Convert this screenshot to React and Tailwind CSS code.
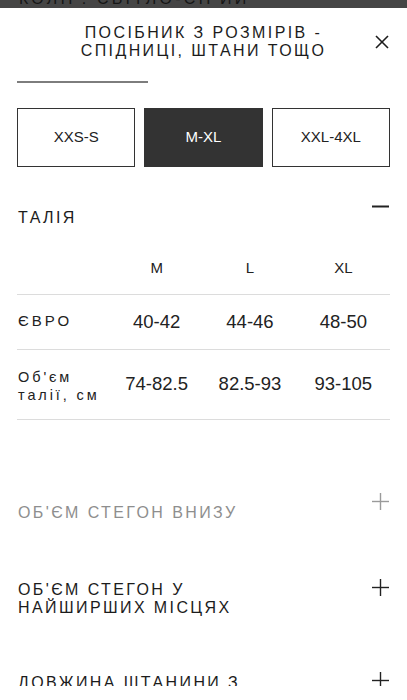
import React from "react";

const font = { fontFamily: '"Liberation Sans", Arial, sans-serif' };

function Plus({ gray }) {
  const c = gray ? "#9a9a9a" : "#222";
  return (
    <svg width="17" height="17" viewBox="0 0 17 17" className="shrink-0 mb-6 mr-[1px]">
      <line x1="0" y1="8.5" x2="17" y2="8.5" stroke={c} strokeWidth="1.4" />
      <line x1="8.5" y1="0" x2="8.5" y2="17" stroke={c} strokeWidth="1.4" />
    </svg>
  );
}

function Minus() {
  return (
    <svg width="17" height="17" viewBox="0 0 17 17" className="shrink-0 mb-6 mr-[1px]">
      <line x1="0" y1="8.5" x2="17" y2="8.5" stroke="#222" strokeWidth="2" />
    </svg>
  );
}

function SectionHead({ lines, gray, open, className }) {
  return (
    <div className={"flex items-center justify-between pl-[18px] pr-[17px] " + className}>
      <div
        className={
          "text-[16px] leading-[18px] tracking-[0.15em] " +
          (gray ? "text-[#8e8e8e]" : "text-[#1c1c1c]")
        }
      >
        {lines.map((l) => (
          <div key={l}>{l}</div>
        ))}
      </div>
      {open ? <Minus /> : <Plus gray={gray} />}
    </div>
  );
}

export default function App() {
  const cols = ["M", "L", "XL"];
  return (
    <div className="relative w-[407px] h-[700px] overflow-hidden bg-white" style={font}>
      <div className="h-[8px] bg-[#454545] overflow-hidden pl-[19px]">
        <div className="-mt-[9px] text-[16px] leading-[16px] tracking-[0.2em] text-[#151515] whitespace-nowrap">
          КОЛІР: СВІТЛО-СІРИЙ
        </div>
      </div>

      <div className="grid grid-cols-[48px_1fr_48px] pt-[16px]">
        <div />
        <div className="text-center text-[16px] leading-[18px] tracking-[0.15em] text-[#1c1c1c]">
          <div>ПОСІБНИК З РОЗМІРІВ -</div>
          <div>СПІДНИЦІ, ШТАНИ ТОЩО</div>
        </div>
        <div className="flex justify-start pl-[16px] pt-[11px]">
          <svg width="14" height="14" viewBox="0 0 14 14">
            <line x1="1" y1="1" x2="13" y2="13" stroke="#1c1c1c" strokeWidth="1.6" />
            <line x1="13" y1="1" x2="1" y2="13" stroke="#1c1c1c" strokeWidth="1.6" />
          </svg>
        </div>
      </div>

      <div className="ml-[17px] mt-[21px] w-[131px] h-[1.5px] bg-[#7d7d7d]" />

      <div className="grid grid-cols-3 gap-[9px] px-[17px] mt-[25px]">
        <div className="h-[59px] border border-[#333] flex items-center justify-center text-[15px] text-[#222]">
          XXS-S
        </div>
        <div className="h-[59px] border border-[#333] bg-[#333] flex items-center justify-center text-[15px] text-white">
          M-XL
        </div>
        <div className="h-[59px] border border-[#333] flex items-center justify-center text-[15px] text-[#222]">
          XXL-4XL
        </div>
      </div>

      <SectionHead lines={["ТАЛІЯ"]} open className="mt-[31px]" />

      <div className="mx-[17px]">
        <div className="grid grid-cols-[93px_1fr_1fr_1fr] pt-[20px] pb-[17px] border-b border-[#dcdcdc] text-[15px] leading-[18px] text-[#222]">
          <div />
          {cols.map((c) => (
            <div key={c} className="text-center">
              {c}
            </div>
          ))}
        </div>
        <div className="grid grid-cols-[93px_1fr_1fr_1fr] h-[55px] items-center border-b border-[#dcdcdc] text-[#222]">
          <div className="text-[15px] tracking-[0.2em] pl-[1px]">ЄВРО</div>
          <div className="text-center text-[18.5px]">40-42</div>
          <div className="text-center text-[18.5px]">44-46</div>
          <div className="text-center text-[18.5px]">48-50</div>
        </div>
        <div className="grid grid-cols-[93px_1fr_1fr_1fr] h-[70px] items-center border-b border-[#dcdcdc] text-[#222]">
          <div className="text-[14.5px] leading-[18px] tracking-[0.2em] pl-[1px] pt-[3px]">
            <div>Об'єм</div>
            <div>талії, см</div>
          </div>
          <div className="text-center text-[18.5px]">74-82.5</div>
          <div className="text-center text-[18.5px]">82.5-93</div>
          <div className="text-center text-[18.5px]">93-105</div>
        </div>
      </div>

      <SectionHead lines={["ОБ'ЄМ СТЕГОН ВНИЗУ"]} gray className="mt-[73px]" />
      <SectionHead lines={["ОБ'ЄМ СТЕГОН У", "НАЙШИРШИХ МІСЦЯХ"]} className="mt-[45px]" />
      <SectionHead lines={["ДОВЖИНА ШТАНИНИ З", "ВНУТРІШНЬОГО БОКУ"]} className="mt-[52px]" />

      <div className="absolute left-0 right-0 bottom-0 h-[14px] bg-white" />
    </div>
  );
}
